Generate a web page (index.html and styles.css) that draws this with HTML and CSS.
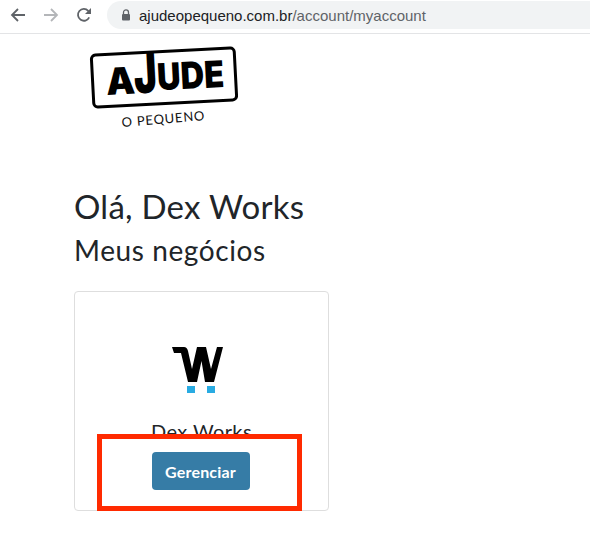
FILE: index.html
```html
<!DOCTYPE html>
<html lang="pt-BR">
  <head>
    <meta charset="UTF-8" />
    <title>Minha conta</title>
    <link rel="stylesheet" href="styles.css">
  </head>
  <body>
    <header class="toolbar">
      <svg class="toolbar__icon" width="16" height="16" viewBox="0 0 16 16"><path d="M15 8H2M8 2 2 8l6 6" fill="none" stroke="#5f6368" stroke-width="1.8"/></svg>
      <svg class="toolbar__icon" width="16" height="16" viewBox="0 0 16 16"><path d="M1 8h13M8 2l6 6-6 6" fill="none" stroke="#b4b6b9" stroke-width="1.8"/></svg>
      <svg class="toolbar__icon" width="16" height="16" viewBox="0 0 16 16"><path d="M13.2 10.4A5.9 5.9 0 1 1 12.2 3.8L14 5.6" fill="none" stroke="#5f6368" stroke-width="1.8"/><path d="M15 1v6H9z" fill="#5f6368"/></svg>
      <div class="omnibox">
        <svg width="10" height="12" viewBox="0 0 10 12"><path d="M2.5 5V3.4a2.5 2.5 0 0 1 5 0V5" fill="none" stroke="#5f6368" stroke-width="1.3"/><rect x="1" y="5" width="8" height="6.5" rx="1" fill="#5f6368"/></svg>
        <span class="omnibox__url">ajudeopequeno.com.br<span class="omnibox__path">/account/myaccount</span></span>
      </div>
    </header>
    <main class="page">
      <svg class="logo" width="150" height="100" viewBox="0 -12 150 100">
        <g transform="rotate(-3 76 31.500)">
          <rect x="4.500" y="5.500" width="143" height="52" rx="4" fill="none" stroke="#000" stroke-width="3"/>
          <text class="logo__word" x="18" y="46" textLength="29" lengthAdjust="spacingAndGlyphs">A</text>
          <text class="logo__word logo__word--tall" x="46" y="46" textLength="23" lengthAdjust="spacingAndGlyphs">J</text>
          <text class="logo__word" x="69" y="44" textLength="67" lengthAdjust="spacingAndGlyphs">UDE</text>
        </g>
        <text class="logo__sub" x="34" y="81" textLength="83" transform="rotate(-4.800 34 81)">O PEQUENO</text>
      </svg>
      <h1 class="title">Olá, Dex Works</h1>
      <h2 class="subtitle">Meus negócios</h2>
      <section class="card">
        <svg class="card__logo" width="52" height="47" viewBox="0 0 52 47">
          <path d="M0 0H12Q15 0 16 4L20 22 25 0H34L39 22 45 0H51L42 35H33L29.500 14 25 35H16L9 6H2Z" fill="#000"/>
          <rect x="15" y="39" width="8" height="7" fill="#29abe2"/>
          <rect x="35" y="39" width="8" height="7" fill="#29abe2"/>
        </svg>
        <p class="card__name">Dex Works</p>
        <a class="btn">Gerenciar</a>
      </section>
      <div class="highlight"></div>
    </main>
  </body>
</html>
```

FILE: styles.css
```css
html,
body {
  margin: 0;
  height: 100%;
  background-color: #fff;
  overflow: hidden;
}
body {
  font-family: "Lato", "Open Sans", sans-serif;
  color: #212529;
}
.toolbar {
  height: 30px;
  display: flex;
  align-items: center;
  border-bottom: 1px solid #e3e4e6;
  padding: 0 0 3px 10px;
}
.toolbar__icon {
  flex: 0 0 16px;
  margin-right: 17px;
}
.omnibox {
  flex: 1 1 auto;
  height: 28px;
  margin-left: -2px;
  padding-left: 14px;
  display: flex;
  align-items: center;
  gap: 8px;
  background-color: #f1f3f4;
  border-radius: 14px 0 0 14px;
}
.omnibox__url {
  font-family: "Liberation Sans", sans-serif;
  font-size: 15px;
  color: #202124;
}
.omnibox__path {
  color: #5f6368;
}
.page {
  position: relative;
  padding: 0 0 0 74px;
}
.logo {
  display: block;
  margin-left: 14px;
}
.logo__word {
  font-family: "Inter", sans-serif;
  font-size: 37px;
  font-weight: 900;
  fill: #000;
}
.logo__word--tall {
  font-size: 56px;
}
.logo__sub {
  font-family: "Lato", sans-serif;
  font-size: 13px;
  fill: #111;
}
.title {
  margin: 52px 0 0;
  font-size: 33px;
  line-height: 40px;
  font-weight: 400;
  letter-spacing: 0.25px;
}
.subtitle {
  margin: 6px 0 0;
  font-size: 28px;
  line-height: 36px;
  font-weight: 400;
  letter-spacing: 0.6px;
}
.card {
  width: 253px;
  height: 218px;
  margin-top: 23px;
  border: 1px solid #dedede;
  border-radius: 4px;
  display: flex;
  flex-direction: column;
  align-items: center;
}
.card__logo {
  margin-top: 55px;
  margin-left: -7px;
}
.card__name {
  margin: 23px 0 0;
  font-size: 20px;
  line-height: 28px;
  letter-spacing: 0.4px;
}
.btn {
  margin-top: 7px;
  margin-left: -2px;
  width: 98px;
  height: 38px;
  display: flex;
  justify-content: center;
  align-items: center;
  background-color: #367ca6;
  border-radius: 4px;
  color: #fff;
  font-size: 16px;
  font-weight: 700;
  letter-spacing: 0.2px;
}
.highlight {
  position: absolute;
  left: 97px;
  top: 400px;
  width: 195px;
  height: 67px;
  border: 5px solid #ff2a00;
}
```
